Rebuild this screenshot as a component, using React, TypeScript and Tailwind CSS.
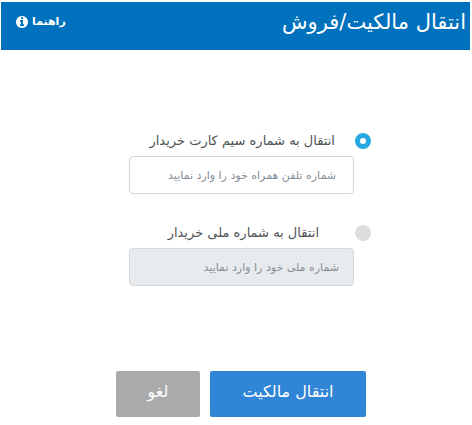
import { useState } from "react";

interface TransferOptionProps {
  id: string;
  label: string;
  placeholder: string;
  checked: boolean;
  onSelect: () => void;
  labelClass: string;
  inputClass: string;
}

const InfoIcon = () => (
  <svg viewBox="0 128 1536 1536" fill="currentColor" aria-hidden="true" className="size-3">
    <path d="M1024 1376v-160q0-14-9-23t-23-9h-96v-512q0-14-9-23t-23-9h-320q-14 0-23 9t-9 23v160q0 14 9 23t23 9h96v320h-96q-14 0-23 9t-9 23v160q0 14 9 23t23 9h448q14 0 23-9t9-23zM896 480v-160q0-14-9-23t-23-9h-192q-14 0-23 9t-9 23v160q0 14 9 23t23 9h192q14 0 23-9t9-23zM1536 896q0 209-103 385.5t-279.5 279.5-385.5 103-385.5-103-279.5-279.5-103-385.5 103-385.5 279.5-279.5 385.5-103 385.5 103 279.5 279.5 103 385.5z" />
  </svg>
);

const TransferOption = ({ id, label, placeholder, checked, onSelect, labelClass, inputClass }: TransferOptionProps) => {
  return (
    <div>
      <div className="flex items-center h-6">
        <input
          type="radio"
          id={id}
          name="transfer"
          checked={checked}
          onChange={onSelect}
          className="appearance-none shrink-0 size-4 rounded-full bg-[#ddd] checked:bg-white checked:border-5 checked:border-[#27a9e1]"
        />
        <label htmlFor={id} className={`text-[13px] leading-6 whitespace-nowrap text-[#4f5356] ${labelClass}`}>
          {label}
        </label>
      </div>
      <input
        type="text"
        aria-label={label}
        placeholder={placeholder}
        disabled={!checked}
        className={`block w-[225px] h-[38px] mr-[17px] mt-[3px] rounded border border-[#d5d7d9] bg-white text-[11px] placeholder:text-[#868e96] disabled:bg-[#e7ebee] ${inputClass}`}
      />
    </div>
  );
};

const App = () => {
  const [selected, setSelected] = useState("sim");

  return (
    <div dir="rtl" className="bg-white font-['DejaVu_Sans',sans-serif]">
      <header className="flex items-start justify-between h-12 mt-0.5 ml-px mr-0.5 pr-1 pl-[15px] bg-[#0071bd] text-white border-b border-[#0068ae]">
        <h1 className="text-[21px] leading-10">انتقال مالکیت/فروش</h1>
        <a href="#help" className="flex items-center gap-1 h-10 text-[11px] font-bold">
          راهنما
          <InfoIcon />
        </a>
      </header>

      <form>
        <div className="flex flex-col gap-[27px] pt-[79px] pr-[101px]">
          <TransferOption
            id="sim"
            label="انتقال به شماره سیم کارت خریدار"
            placeholder="شماره تلفن همراه خود را وارد نمایید"
            checked={selected === "sim"}
            onSelect={() => setSelected("sim")}
            labelClass="mr-5"
            inputClass="px-[17px]"
          />
          <TransferOption
            id="national"
            label="انتقال به شماره ملی خریدار"
            placeholder="شماره ملی خود را وارد نمایید"
            checked={selected === "national"}
            onSelect={() => setSelected("national")}
            labelClass="mr-9"
            inputClass="px-3.5"
          />
        </div>

        <div className="flex gap-2.5 mt-[85px] pr-[106px]">
          <button type="submit" className="w-[156px] h-[46px] pb-1 rounded-xs bg-[#3085d6] text-base text-white">
            انتقال مالکیت
          </button>
          <button type="button" className="w-[84px] h-[46px] pb-1 rounded-xs bg-[#aaa] text-base text-white">
            لغو
          </button>
        </div>
      </form>
    </div>
  );
};

export default App;
